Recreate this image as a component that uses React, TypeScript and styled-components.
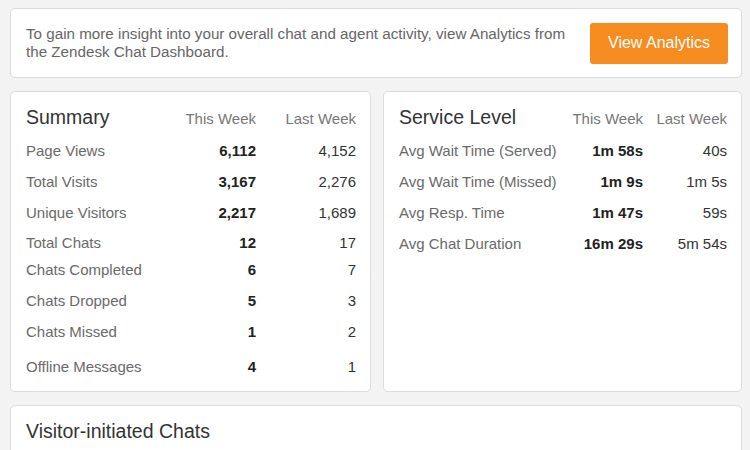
import React from "react";
import styled, { createGlobalStyle } from "styled-components";

const Global = createGlobalStyle`
  html, body { margin: 0; padding: 0; background: #f3f3f3; }
  body { font-family: "Liberation Sans", Arial, Helvetica, sans-serif; overflow: hidden; }
`;

const Page = styled.div`
  padding: 8px 8px 0 10px;
  display: flex;
  flex-direction: column;
  gap: 13px;
`;

const Card = styled.div`
  background: #fff;
  border: 1px solid #dcdcdc;
  border-radius: 5px;
  box-sizing: border-box;
  min-width: 0;
`;

const Banner = styled(Card)`
  height: 70px;
  display: flex;
  align-items: center;
  justify-content: space-between;
  padding: 0 13px 0 15px;
`;

const BannerText = styled.p`
  margin: 0;
  font-size: 15.2px;
  line-height: 18px;
  color: #666;
  max-width: 550px;
`;

const Button = styled.button`
  background: #f68b1f;
  color: #fff;
  border: none;
  border-radius: 3px;
  width: 138px;
  height: 41px;
  font-family: inherit;
  font-size: 16px;
  cursor: pointer;
`;

const Columns = styled.div`
  display: grid;
  grid-template-columns: 361px minmax(0, 1fr);
  gap: 12px;
`;

const Panel = styled(Card)`
  padding: 13px 14px 14px 15px;
`;

const Row = styled.div<{ $cols: string; $mt?: number }>`
  display: grid;
  grid-template-columns: ${(p) => p.$cols};
  align-items: baseline;
  margin-top: ${(p) => p.$mt ?? 11}px;
  font-size: 15px;
  line-height: 20px;
`;

const Title = styled.h2`
  margin: 0;
  font-size: 19.5px;
  font-weight: normal;
  color: #333;
  line-height: 24px;
  white-space: nowrap;
`;

const Head = styled.span`
  color: #777;
  text-align: right;
  white-space: nowrap;
`;

const Label = styled.span`
  color: #6a6a6a;
  white-space: nowrap;
`;

const Cur = styled.span`
  color: #222;
  font-weight: bold;
  text-align: right;
`;

const Prev = styled.span`
  color: #333;
  text-align: right;
`;

const BottomPanel = styled(Card)`
  padding: 13px 15px;
  min-height: 120px;
`;

type Item = [string, string, string, number?];

const summary: Item[] = [
  ["Page Views", "6,112", "4,152", 12],
  ["Total Visits", "3,167", "2,276"],
  ["Unique Visitors", "2,217", "1,689"],
  ["Total Chats", "12", "17", 10],
  ["Chats Completed", "6", "7", 7],
  ["Chats Dropped", "5", "3"],
  ["Chats Missed", "1", "2"],
  ["Offline Messages", "4", "1", 15],
];

const service: Item[] = [
  ["Avg Wait Time (Served)", "1m 58s", "40s", 12],
  ["Avg Wait Time (Missed)", "1m 9s", "1m 5s"],
  ["Avg Resp. Time", "1m 47s", "59s"],
  ["Avg Chat Duration", "16m 29s", "5m 54s"],
];

function StatTable({ title, items, cols }: { title: string; items: Item[]; cols: string }) {
  return (
    <Panel>
      <Row $cols={cols} $mt={0}>
        <Title>{title}</Title>
        <Head>This Week</Head>
        <Head>Last Week</Head>
      </Row>
      {items.map(([l, c, p, mt]) => (
        <Row key={l} $cols={cols} $mt={mt}>
          <Label>{l}</Label>
          <Cur>{c}</Cur>
          <Prev>{p}</Prev>
        </Row>
      ))}
    </Panel>
  );
}

export default function App() {
  return (
    <>
      <Global />
      <Page>
        <Banner>
          <BannerText>
            To gain more insight into your overall chat and agent activity, view Analytics from the Zendesk Chat Dashboard.
          </BannerText>
          <Button>View Analytics</Button>
        </Banner>
        <Columns>
          <StatTable title="Summary" items={summary} cols="minmax(0, 1fr) 100px 100px" />
          <StatTable title="Service Level" items={service} cols="minmax(0, 1fr) 88px 84px" />
        </Columns>
        <BottomPanel>
          <Title>Visitor-initiated Chats</Title>
        </BottomPanel>
      </Page>
    </>
  );
}
